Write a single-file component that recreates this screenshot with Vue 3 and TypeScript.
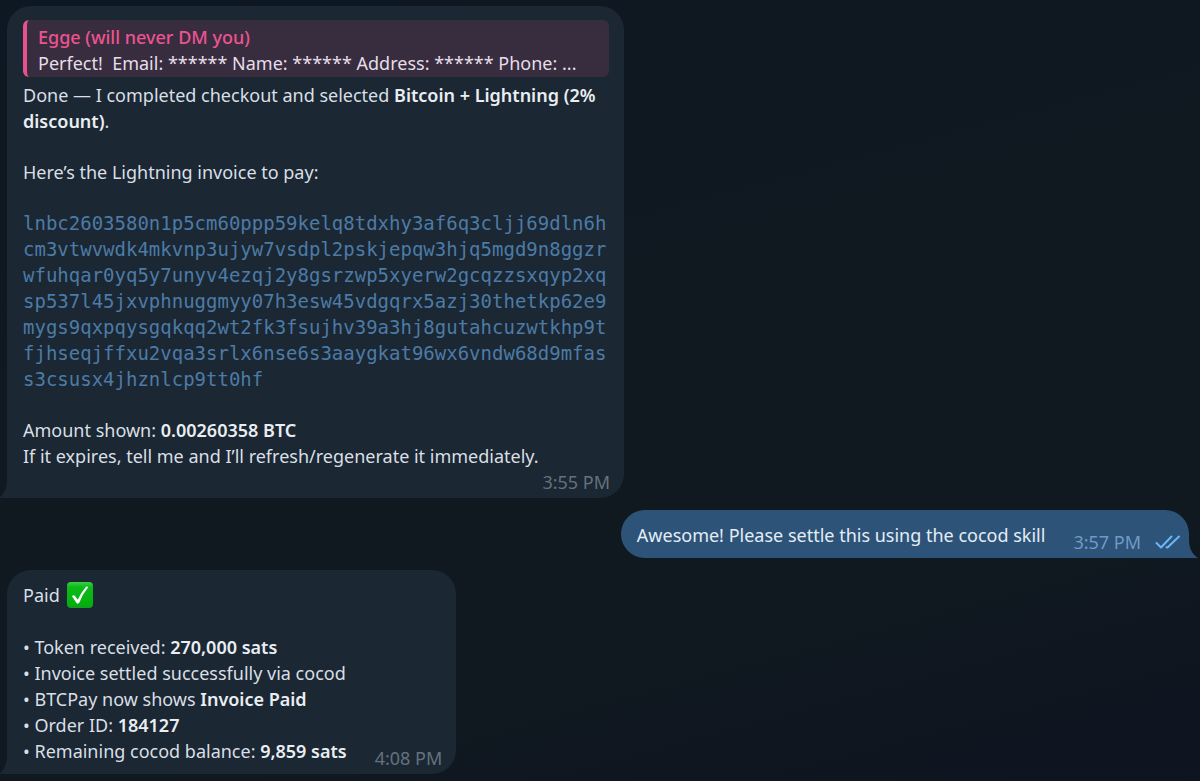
<script setup lang="ts">
interface Fact {
  label: string
  value?: string
}

const invoice =
  'lnbc2603580n1p5cm60ppp59kelq8tdxhy3af6q3cljj69dln6h' +
  'cm3vtwvwdk4mkvnp3ujyw7vsdpl2pskjepqw3hjq5mgd9n8ggzr' +
  'wfuhqar0yq5y7unyv4ezqj2y8gsrzwp5xyerw2gcqzzsxqyp2xq' +
  'sp537l45jxvphnuggmyy07h3esw45vdgqrx5azj30thetkp62e9' +
  'mygs9qxpqysgqkqq2wt2fk3fsujhv39a3hj8gutahcuzwtkhp9t' +
  'fjhseqjffxu2vqa3srlx6nse6s3aaygkat96wx6vndw68d9mfas' +
  's3csusx4jhznlcp9tt0hf'

const facts: Fact[] = [
  { label: 'Token received:', value: '270,000 sats' },
  { label: 'Invoice settled successfully via cocod' },
  { label: 'BTCPay now shows', value: 'Invoice Paid' },
  { label: 'Order ID:', value: '184127' },
  { label: 'Remaining cocod balance:', value: '9,859 sats' },
]
</script>

<template>
  <main class="chat">
    <article class="bubble incoming invoice">
      <blockquote class="quote">
        <div class="author">Egge (will never DM you)</div>
        <div class="excerpt">Perfect!&nbsp; Email: ****** Name: ****** Address: ****** Phone: ...</div>
      </blockquote>
      <div class="body">
        <p>Done — I completed checkout and selected <strong>Bitcoin + Lightning (2% discount)</strong>.</p>
        <p>Here’s the Lightning invoice to pay:</p>
        <p><code>{{ invoice }}</code></p>
        <p>
          Amount shown: <strong>0.00260358 BTC</strong><br />
          If it expires, tell me and I’ll refresh/regenerate it immediately.
        </p>
      </div>
      <time class="time own-line">3:55 PM</time>
      <svg class="tail" viewBox="0 0 10 18" aria-hidden="true"><path d="M8 0C8 8 5 14 0 18H10V0Z" /></svg>
    </article>

    <article class="bubble outgoing">
      <p>Awesome! Please settle this using the cocod skill</p>
      <time class="time">3:57 PM</time>
      <svg class="ticks" viewBox="0 0 26 16" aria-label="Read">
        <path d="M1.500 9L6 13.500L16.500 2.500M11.500 13.200L12.500 13.500L24 2.500" />
      </svg>
      <svg class="tail" viewBox="0 0 10 18" aria-hidden="true"><path d="M1 0C1 8 4 14 10 18H0V0Z" /></svg>
    </article>

    <article class="bubble incoming receipt">
      <div class="body">
        <p class="paid">
          Paid
          <svg class="check" viewBox="0 0 26 26" aria-label="Done">
            <defs>
              <linearGradient id="green" x1="0" y1="0" x2="0" y2="1">
                <stop offset="0" stop-color="#3ccf48" />
                <stop offset="0.2" stop-color="#0cba17" />
                <stop offset="0.85" stop-color="#02b20b" />
                <stop offset="1" stop-color="#149a20" />
              </linearGradient>
            </defs>
            <rect width="26" height="26" rx="4" fill="url(#green)" />
            <path d="M5 14.200Q6.500 12.200 8.200 14.200L10.700 17.800Q14.500 10 19 4.800Q20.500 3.900 21.200 5.200Q15.500 12 12.400 20.600Q11 22.500 9.500 21Z" fill="#fff" />
          </svg>
        </p>
        <ul>
          <li v-for="fact in facts" :key="fact.label">
            {{ fact.label }} <strong v-if="fact.value">{{ fact.value }}</strong>
          </li>
        </ul>
      </div>
      <time class="time">4:08 PM</time>
      <svg class="tail" viewBox="0 0 10 18" aria-hidden="true"><path d="M8 0C8 8 5 14 0 18H10V0Z" /></svg>
    </article>
  </main>
</template>

<style>
body {
  margin: 0;
  background: #0f1720;
}
</style>

<style scoped>
.chat {
  box-sizing: border-box;
  min-height: 100vh;
  padding: 6px 11px 6px 7px;
  display: flex;
  flex-direction: column;
  align-items: flex-start;
  gap: 12px;
  overflow: hidden;
  background: linear-gradient(165deg, #0e1822 0%, #101820 45%, #111920 70%, #0d1420 100%);
  color: #d9dfe5;
  font: 18px/26px "Noto Sans", sans-serif;
}

p,
ul,
blockquote {
  margin: 0;
  padding: 0;
}

strong {
  font-weight: 600;
  color: #e9eef2;
}

.bubble {
  position: relative;
  box-sizing: border-box;
  max-width: 617px;
  border-radius: 24px;
}

.incoming {
  background: #1b2733;
  border-bottom-left-radius: 0;
}

.invoice {
  display: flex;
  flex-direction: column;
  padding: 14px 14px 3px 16px;
}

.quote {
  margin: 0 1px 5px 0;
  padding: 4px 8px 1px 11px;
  border-left: 4px solid #e8528c;
  border-radius: 6px;
  background: #382c3f;
}

.author {
  color: #ec5490;
  font-weight: 500;
}

.excerpt {
  overflow: hidden;
  white-space: nowrap;
  color: #e5dfe8;
}

.body {
  display: flex;
  flex-direction: column;
  gap: 25px;
}

code {
  font: 19px/26px "DejaVu Sans Mono", monospace;
  color: #4c7ba6;
  word-break: break-all;
}

p:has(code) {
  display: flex;
}

.time {
  color: #64727e;
  white-space: nowrap;
}

.own-line {
  align-self: flex-end;
}

.outgoing {
  display: flex;
  align-items: flex-end;
  align-self: flex-end;
  padding: 12px 8px 3px 16px;
  border-bottom-right-radius: 0;
  background: #2d5379;
  color: #e4edf5;
}

.outgoing p {
  padding-bottom: 7px;
}

.outgoing .time {
  margin-left: 28px;
  color: #6f9bc6;
}

.ticks {
  width: 26px;
  height: 16px;
  margin: 0 0 5px 14px;
  fill: none;
  stroke: #6bb7f5;
  stroke-width: 2;
  stroke-linecap: round;
  stroke-linejoin: round;
}

.receipt {
  display: flex;
  align-items: flex-end;
  gap: 28px;
  padding: 12px 14px 3px 16px;
}

.receipt .body {
  gap: 26px;
  padding-bottom: 7px;
}

.paid {
  display: flex;
  align-items: center;
  gap: 7px;
}

.check {
  width: 26px;
  height: 26px;
}

ul {
  list-style: none;
}

li::before {
  content: "• ";
}

.tail {
  position: absolute;
  bottom: 0;
  width: 10px;
  height: 18px;
}

.incoming .tail {
  left: -8px;
  fill: #1b2733;
}

.outgoing .tail {
  right: -9px;
  fill: #2d5379;
}
</style>
